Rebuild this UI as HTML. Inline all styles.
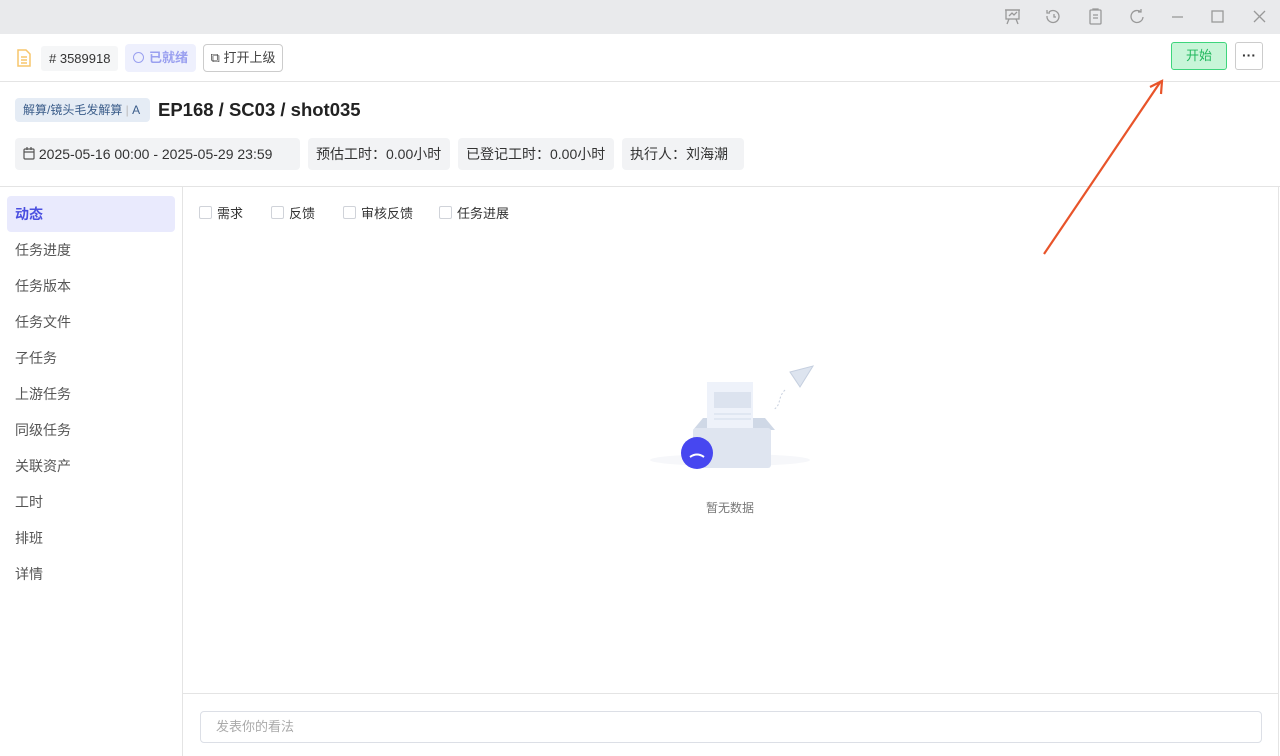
<!DOCTYPE html>
<html><head><meta charset="utf-8"><style>
*{box-sizing:border-box;margin:0;padding:0}
body{width:1280px;height:756px;overflow:hidden;background:#fff;font-family:"Liberation Sans","Noto Sans CJK SC",sans-serif;font-size:13px;color:#333;position:relative}
.abs{position:absolute}
.tb{left:0;top:0;width:1280px;height:34px;background:#e9eaec}
.chip{background:#f2f3f5;border-radius:4px;height:32px;top:138px;line-height:32px;padding:0 8px;font-size:14px;color:#333;white-space:nowrap;overflow:hidden}
.nav{left:7px;width:168px;height:36px;line-height:36px;padding-left:8px;font-size:14px;color:#555}
.cb{top:203px;font-size:13px;color:#333;display:flex;align-items:center}
.cb i{display:inline-block;width:13px;height:13px;border:1px solid #d0d3d9;border-radius:2px;margin-right:5px}
</style></head><body>
<div class="abs tb"></div>
<svg class="abs" style="left:1000px;top:6px" width="270" height="22" fill="none" stroke="#999" stroke-width="1.3">
<rect x="6" y="4" width="13" height="9"/><path d="M5 4h15M9 13l-2 5M16 13l2 5M9 10l3-3 2 2 3-3"/>
<path d="M49 6a6 6 0 1 1-2 4M47 4v3h3M54 8v3h2"/>
<rect x="90" y="4" width="11" height="14" rx="1"/><path d="M93 4v-1h5v1M93 9h5M93 12h5"/>
<path d="M141 6a6 6 0 1 0 2 5M141 3v3h-3"/>
<path d="M172 11h11"/><rect x="212" y="5" width="11" height="11"/><path d="M254 5l11 11M265 5l-11 11"/>
</svg>
<svg class="abs" style="left:16px;top:49px" width="16" height="18" fill="none" stroke="#f7c56b" stroke-width="1.5"><path d="M2 1h8l4 4v12H2z M5 8h6M5 11h6M5 14h6"/></svg>
<div class="abs" style="left:41px;top:46px;height:25px;line-height:25px;padding:0 8px;background:#f5f6f7;border-radius:3px;font-size:13px">#&nbsp;3589918</div>
<div class="abs" style="left:125px;top:44px;height:28px;line-height:28px;padding:0 8px;background:#eef0fd;border-radius:4px;font-size:13px;color:#9aa0f0;font-weight:bold"><span style="display:inline-block;width:11px;height:11px;border:1px solid #9aa0f0;border-radius:50%;margin-right:5px;vertical-align:-1px"></span>已就绪</div>
<div class="abs" style="left:203px;top:44px;width:80px;height:28px;line-height:26px;border:1px solid #ccc;border-radius:4px;font-size:13px;text-align:center;color:#444">⧉ 打开上级</div>
<div class="abs" style="left:1171px;top:42px;width:56px;height:28px;line-height:26px;border:1px solid #3ed57c;background:#c8f5d8;border-radius:3px;text-align:center;color:#22b85e;font-size:13px">开始</div>
<div class="abs" style="left:1235px;top:42px;width:28px;height:28px;line-height:24px;border:1px solid #ccc;border-radius:3px;text-align:center;font-weight:bold;font-size:14px">···</div>
<div class="abs" style="left:0;top:81px;width:1280px;height:1px;background:#e4e4e4"></div>
<div class="abs" style="left:15px;top:98px;width:135px;height:24px;line-height:24px;padding:0 0 0 8px;background:#e5ecf5;border-radius:4px;color:#3b5d8a;font-size:12px;white-space:nowrap">解算/镜头毛发解算 <span style="color:#bbb">|</span> A</div>
<div class="abs" style="left:158px;top:97px;font-size:18.5px;font-weight:bold;color:#222;line-height:26px">EP168 / SC03 / shot035</div>
<div class="abs chip" style="left:15px;width:285px"><svg width="12" height="13" style="vertical-align:-1px" fill="none" stroke="#555" stroke-width="1.2"><rect x="1" y="2" width="10" height="10" rx="1"/><path d="M1 5h10M4 0v3M8 0v3"/></svg> 2025-05-16 00:00 - 2025-05-29 23:59</div>
<div class="abs chip" style="left:308px;width:142px">预估工时：0.00小时</div>
<div class="abs chip" style="left:458px;width:156px">已登记工时：0.00小时</div>
<div class="abs chip" style="left:622px;width:122px">执行人：刘海潮</div>
<div class="abs" style="left:0;top:186px;width:1280px;height:1px;background:#e4e4e4"></div>
<div class="abs" style="left:182px;top:187px;width:1px;height:569px;background:#e4e4e4"></div>
<div class="abs" style="left:1278px;top:187px;width:1px;height:569px;background:#e4e4e4"></div>
<div class="abs nav" style="top:196px;background:#e9eafd;color:#4a4fe0;border-radius:4px;font-weight:bold">动态</div>
<div class="abs nav" style="top:232px">任务进度</div>
<div class="abs nav" style="top:268px">任务版本</div>
<div class="abs nav" style="top:304px">任务文件</div>
<div class="abs nav" style="top:340px">子任务</div>
<div class="abs nav" style="top:376px">上游任务</div>
<div class="abs nav" style="top:412px">同级任务</div>
<div class="abs nav" style="top:448px">关联资产</div>
<div class="abs nav" style="top:484px">工时</div>
<div class="abs nav" style="top:520px">排班</div>
<div class="abs nav" style="top:556px">详情</div>
<div class="abs cb" style="left:199px"><i></i>需求</div>
<div class="abs cb" style="left:271px"><i></i>反馈</div>
<div class="abs cb" style="left:343px"><i></i>审核反馈</div>
<div class="abs cb" style="left:439px"><i></i>任务进展</div>
<svg class="abs" style="left:640px;top:360px" width="190" height="115">
<ellipse cx="90" cy="100" rx="80" ry="6" fill="#f6f7fa"/>
<path d="M53 70l10-12h62l10 12z" fill="#cfd8e6"/>
<rect x="67" y="22" width="46" height="58" fill="#eef2fa"/>
<rect x="74" y="32" width="37" height="16" fill="#dce3ef"/>
<path d="M74 54h37M74 59h37" stroke="#dce3ef" stroke-width="1.5"/>
<rect x="53" y="68" width="78" height="40" rx="3" fill="#dfe5f0"/>
<path d="M150 12l23-6-13 21z" fill="#dde4ef" stroke="#c5cfdf"/>
<path d="M145 30c-8 8-3 15-12 20" stroke="#c8d0de" stroke-dasharray="2 2" fill="none"/>
<circle cx="57" cy="93" r="16" fill="#4747f0"/>
<path d="M50 97q7-5 14 0" stroke="#fff" stroke-width="2" fill="none"/>
</svg>
<div class="abs" style="left:680px;top:499px;width:100px;text-align:center;color:#777;font-size:12px">暂无数据</div>
<div class="abs" style="left:183px;top:693px;width:1095px;height:1px;background:#e4e4e4"></div>
<div class="abs" style="left:200px;top:711px;width:1062px;height:32px;border:1px solid #dcdfe6;border-radius:4px;line-height:30px;padding-left:15px;color:#aaa;font-size:13px">发表你的看法</div>
<svg class="abs" style="left:1040px;top:75px" width="130" height="185"><path d="M4 179L121 6" stroke="#e8542a" stroke-width="2.2"/><path d="M110 12l12-6-1 13" stroke="#e8542a" stroke-width="2.2" fill="none"/></svg>
</body></html>
